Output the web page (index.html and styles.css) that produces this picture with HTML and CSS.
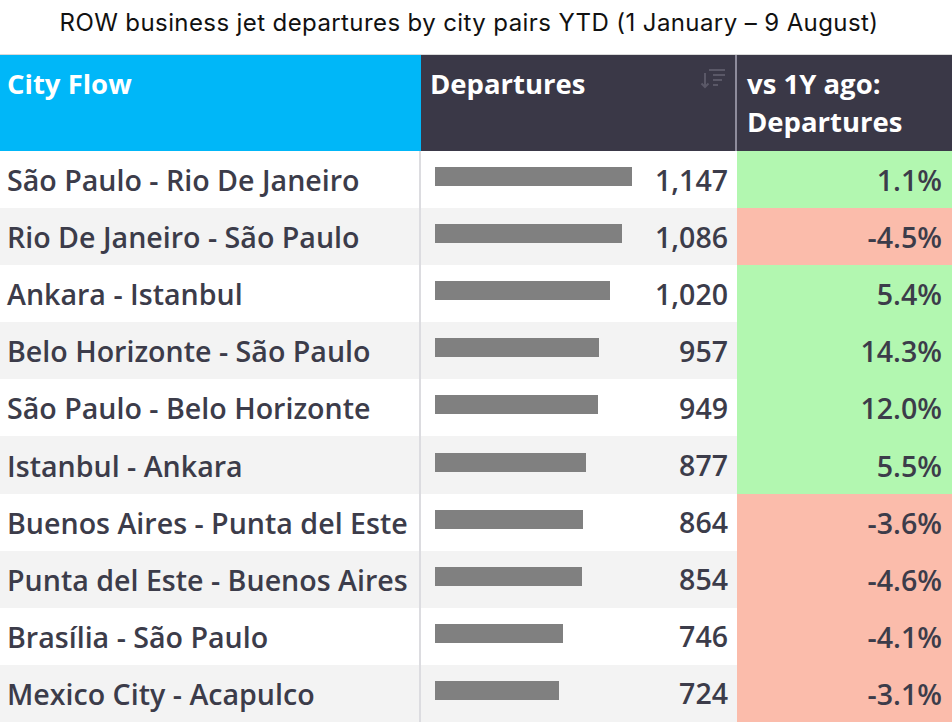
FILE: index.html
```html
<!DOCTYPE html>
<html>
<head>
<meta charset="utf-8">
<link rel="stylesheet" href="styles.css">
</head>
<body>
<h1 class="title">ROW business jet departures by city pairs YTD (1 January – 9 August)</h1>
<div class="table">
  <div class="row head">
    <div class="cell c1 h-cyan">City Flow</div>
    <div class="cell c2 h-dark">
      <span>Departures</span>
      <svg class="sort" width="26" height="22" viewBox="0 0 26 22">
        <g fill="none" stroke="#5a5867" stroke-width="2">
          <path d="M9 2h16M13 7h12M13 12h9M13 17h5"/>
          <path d="M5 5v14M1.5 15.5L5 19l3.5-3.5"/>
        </g>
      </svg>
    </div>
    <div class="cell c3 h-dark">vs 1Y ago:<br>Departures</div>
  </div>
  <div class="row">
    <div class="cell c1">São Paulo - Rio De Janeiro</div>
    <div class="cell c2"><div class="bar" style="width:197px"></div><span class="num">1,147</span></div>
    <div class="cell c3 pos">1.1%</div>
  </div>
  <div class="row alt">
    <div class="cell c1">Rio De Janeiro - São Paulo</div>
    <div class="cell c2"><div class="bar" style="width:187px"></div><span class="num">1,086</span></div>
    <div class="cell c3 neg">-4.5%</div>
  </div>
  <div class="row">
    <div class="cell c1">Ankara - Istanbul</div>
    <div class="cell c2"><div class="bar" style="width:175px"></div><span class="num">1,020</span></div>
    <div class="cell c3 pos">5.4%</div>
  </div>
  <div class="row alt">
    <div class="cell c1">Belo Horizonte - São Paulo</div>
    <div class="cell c2"><div class="bar" style="width:164px"></div><span class="num">957</span></div>
    <div class="cell c3 pos">14.3%</div>
  </div>
  <div class="row">
    <div class="cell c1">São Paulo - Belo Horizonte</div>
    <div class="cell c2"><div class="bar" style="width:163px"></div><span class="num">949</span></div>
    <div class="cell c3 pos">12.0%</div>
  </div>
  <div class="row alt">
    <div class="cell c1">Istanbul - Ankara</div>
    <div class="cell c2"><div class="bar" style="width:151px"></div><span class="num">877</span></div>
    <div class="cell c3 pos">5.5%</div>
  </div>
  <div class="row">
    <div class="cell c1">Buenos Aires - Punta del Este</div>
    <div class="cell c2"><div class="bar" style="width:148px"></div><span class="num">864</span></div>
    <div class="cell c3 neg">-3.6%</div>
  </div>
  <div class="row alt">
    <div class="cell c1">Punta del Este - Buenos Aires</div>
    <div class="cell c2"><div class="bar" style="width:147px"></div><span class="num">854</span></div>
    <div class="cell c3 neg">-4.6%</div>
  </div>
  <div class="row">
    <div class="cell c1">Brasília - São Paulo</div>
    <div class="cell c2"><div class="bar" style="width:128px"></div><span class="num">746</span></div>
    <div class="cell c3 neg">-4.1%</div>
  </div>
  <div class="row alt">
    <div class="cell c1">Mexico City - Acapulco</div>
    <div class="cell c2"><div class="bar" style="width:124px"></div><span class="num">724</span></div>
    <div class="cell c3 neg">-3.1%</div>
  </div>
</div>
</body>
</html>
```

FILE: styles.css
```css
html, body {
  margin: 0;
  padding: 0;
  background: #ffffff;
}
body {
  width: 952px;
  height: 723px;
  overflow: hidden;
  font-family: "Open Sans", "Noto Sans", sans-serif;
}
.title {
  margin: 0;
  height: 55px;
  box-sizing: border-box;
  padding-top: 6px;
  padding-right: 14px;
  text-align: center;
  font-family: "Inter", "Noto Sans", sans-serif;
  font-weight: 400;
  font-size: 24px;
  letter-spacing: 0.4px;
  line-height: 34px;
  color: #111111;
  border-bottom: 1px solid #d9d9d9;
}
.table {
  display: flex;
  flex-direction: column;
}
.row {
  display: grid;
  grid-template-columns: 421px 316px 215px;
  height: 57.1px;
  background: #ffffff;
}
.row.alt {
  background: #f3f3f3;
}
.row.head {
  height: 96px;
}
.cell {
  box-sizing: border-box;
  font-size: 28.6px;
  font-weight: 600;
  color: #3c3c4a;
  display: flex;
  align-items: center;
}
.c1 {
  padding-left: 7px;
  border-right: 2px solid #dcdce0;
  white-space: nowrap;
}
.c2 {
  padding-left: 14px;
  padding-right: 9px;
  justify-content: space-between;
}
.c3 {
  justify-content: flex-end;
  padding-right: 10px;
}
.head .cell {
  color: #ffffff;
  font-weight: 700;
  font-size: 27.5px;
  align-items: flex-start;
  line-height: 38px;
  padding-top: 10px;
}
.h-cyan {
  background: #00b7f8;
  border-right: 1px solid #00b7f8;
}
.h-dark {
  background: #3a3847;
}
.head .c2 {
  padding-left: 9px;
  border-right: 2px solid #8e8c9c;
}
.head .c3 {
  justify-content: flex-start;
  padding-left: 10px;
}
.sort {
  margin-top: 3px;
  margin-right: 0px;
}
.bar {
  height: 19px;
  margin-bottom: 6px;
  background: #808080;
}
.num {
  font-size: 28.5px;
  text-align: right;
}
.pos {
  background: #b2f7b0;
}
.neg {
  background: #fbbcab;
}
```
